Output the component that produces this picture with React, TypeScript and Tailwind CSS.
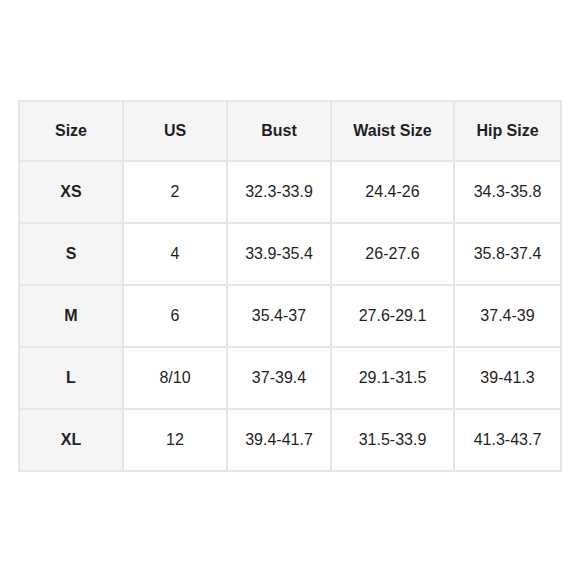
const headers = ['Size', 'US', 'Bust', 'Waist Size', 'Hip Size'];

const rows = [
  ['XS', '2', '32.3-33.9', '24.4-26', '34.3-35.8'],
  ['S', '4', '33.9-35.4', '26-27.6', '35.8-37.4'],
  ['M', '6', '35.4-37', '27.6-29.1', '37.4-39'],
  ['L', '8/10', '37-39.4', '29.1-31.5', '39-41.3'],
  ['XL', '12', '39.4-41.7', '31.5-33.9', '41.3-43.7'],
];

export default function App() {
  return (
    <div className="w-[580px] h-[580px] bg-white pt-[100px] pl-[18px] font-['Liberation_Sans',Arial,sans-serif] text-[#1f1f1f]">
      <table className="table-fixed border-collapse border-2 border-[#e6e6e6] text-base text-center">
        <colgroup>
          <col className="w-[104px]" />
          <col className="w-[104px]" />
          <col className="w-[104px]" />
          <col className="w-[123px]" />
          <col className="w-[107px]" />
        </colgroup>
        <thead>
          <tr className="h-[60px] bg-[#f5f5f5]">
            {headers.map((h) => (
              <th key={h} className="border-2 border-[#e6e6e6] font-bold">
                {h}
              </th>
            ))}
          </tr>
        </thead>
        <tbody>
          {rows.map((row) => (
            <tr key={row[0]} className="h-[62px]">
              {row.map((cell, i) => (
                <td
                  key={i}
                  className={
                    i === 0
                      ? 'border-2 border-[#e6e6e6] bg-[#f5f5f5] font-bold'
                      : 'border-2 border-[#e6e6e6] bg-white'
                  }
                >
                  {cell}
                </td>
              ))}
            </tr>
          ))}
        </tbody>
      </table>
    </div>
  );
}
